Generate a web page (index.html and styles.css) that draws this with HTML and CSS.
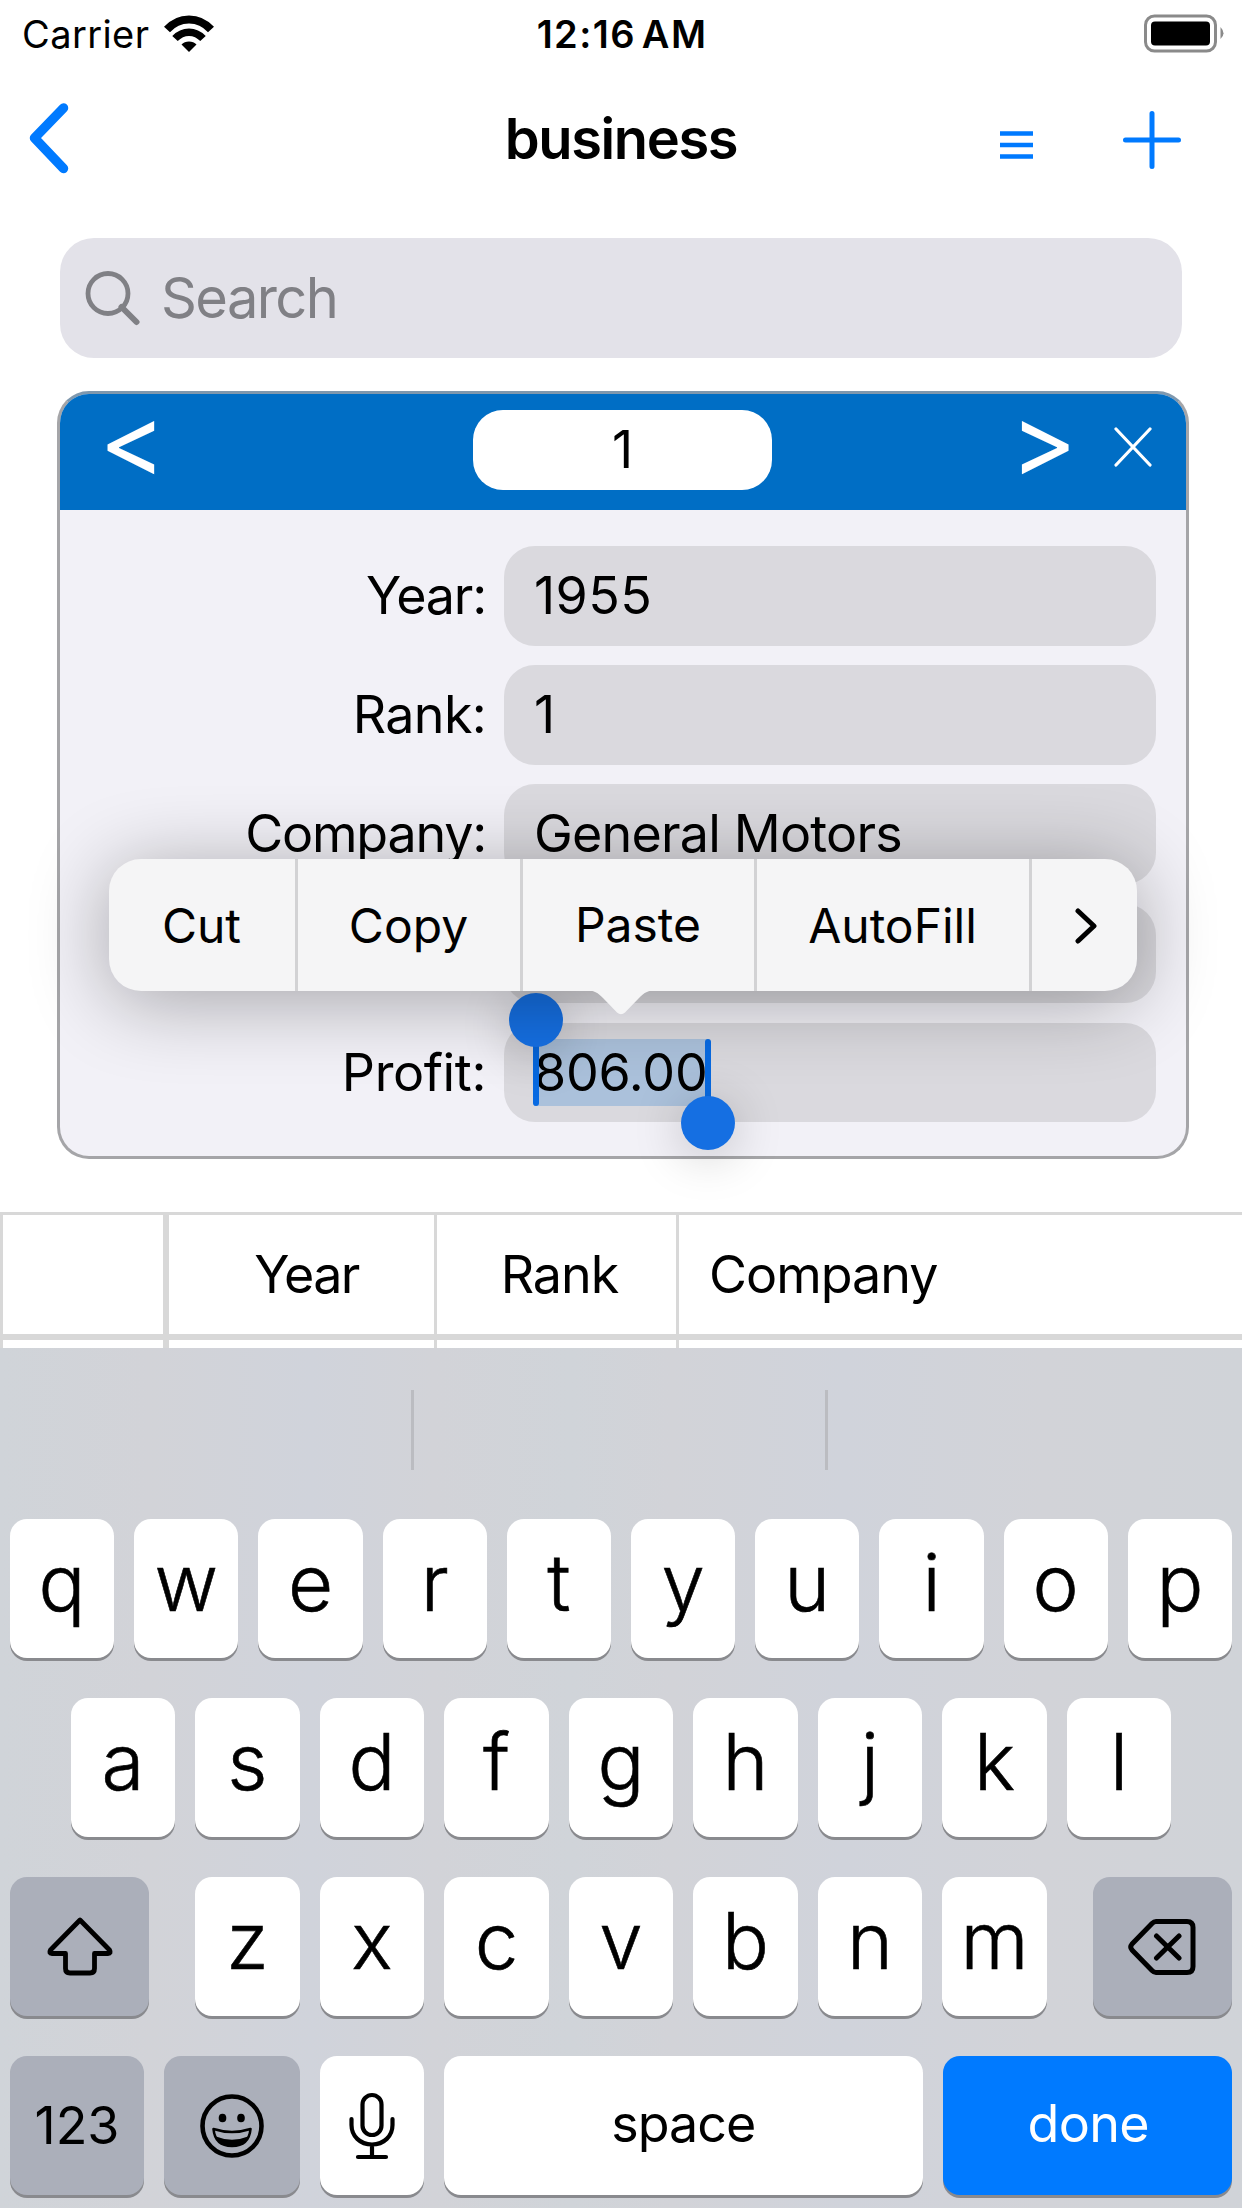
FILE: index.html
```
<!DOCTYPE html>
<html lang="en">
<head>
  <meta charset="UTF-8">
  <title>business</title>
  <link rel="stylesheet" href="styles.css">
</head>
<body>

  <div class="status-bar">
    <div class="carrier">
      <span class="carrier-name">Carrier</span>
      <svg class="wifi" width="50" height="38" viewBox="0 0 50 38">
        <path d="M3 14.5 C15 1 35 1 47 14.5" fill="none" stroke="#000" stroke-width="8"/>
        <path d="M11 23.5 C19 15 31 15 39 23.5" fill="none" stroke="#000" stroke-width="7.5"/>
        <path d="M25 37 L17.5 29.5 C21 25.5 29 25.5 32.500 29.5 Z"/>
      </svg>
    </div>
    <span class="time">12:16 AM</span>
    <svg class="battery" width="82" height="40" viewBox="0 0 82 40">
      <rect x="2.500" y="2" width="70" height="35" rx="9" fill="none" stroke="#8a8a8a" stroke-width="3"/>
      <rect x="8" y="7.500" width="59" height="24" rx="4"/>
      <path d="M77.500 13 q6 6.500 0 12 Z" fill="#8a8a8a"/>
    </svg>
  </div>

  <div class="nav-bar">
    <svg class="back" width="44" height="74" viewBox="0 0 44 74">
      <path d="M37.500 7 L8.500 37 L37.500 67.500" fill="none" stroke="#007aff" stroke-width="9.500" stroke-linecap="round" stroke-linejoin="round"/>
    </svg>
    <h1>business</h1>
    <div class="actions">
      <svg width="33" height="28" viewBox="0 0 33 28" class="list-icon">
        <path d="M0 2.500 H33 M0 14 H33 M0 25.500 H33" stroke="#007aff" stroke-width="4.500"/>
      </svg>
      <svg width="58" height="58" viewBox="0 0 58 58">
        <path d="M29 2.500 V55.500 M2.500 29 H55.500" stroke="#007aff" stroke-width="5" stroke-linecap="round"/>
      </svg>
    </div>
  </div>

  <div class="search">
    <svg width="56" height="56" viewBox="0 0 56 56">
      <path d="M36.500 37 L51.500 52" stroke="#808085" stroke-width="6" stroke-linecap="round"/>
      <circle cx="23" cy="23.500" r="20" fill="none" stroke="#808085" stroke-width="4.800"/>
    </svg>
    <span>Search</span>
  </div>

  <div class="card">
    <div class="card-header">
      <span class="prev">&lt;</span>
      <span class="record">1</span>
      <span class="next">&gt;</span>
      <svg class="close" width="38" height="40" viewBox="0 0 38 40">
        <path d="M2 2 L36 38 M36 2 L2 38" stroke="#fff" stroke-width="3.200" stroke-linecap="round"/>
      </svg>
    </div>
    <div class="fields">
      <label>Year:</label><div class="field digits">1955</div>
      <label class="rank-label">Rank:</label><div class="field">1</div>
      <label>Company:</label><div class="field">General Motors</div>
      <label></label><div class="field"></div>
      <label class="profit-label">Profit:</label>
      <div class="field">
        <span class="selection">806.00<i class="handle start"></i><i class="handle end"></i></span>
      </div>
    </div>

    <div class="edit-menu">
      <span class="item cut">Cut</span>
      <span class="item copy">Copy</span>
      <span class="item paste">Paste</span>
      <span class="item autofill">AutoFill</span>
      <span class="item more">
        <svg width="24" height="36" viewBox="0 0 24 36">
          <path d="M4 3 L20 18 L4 33" fill="none" stroke="#000" stroke-width="5" stroke-linecap="round" stroke-linejoin="round"/>
        </svg>
      </span>
      <svg class="arrow" width="76" height="26" viewBox="0 0 76 26">
        <path d="M0 0 C12 0 15 3 20 8 L34 22.500 Q38 26 42 22.500 L56 8 C61 3 64 0 76 0 Z" fill="#f5f5f6"/>
      </svg>
    </div>
  </div>

  <div class="table">
    <div class="row">
      <span class="corner"></span>
      <span class="year">Year</span>
      <span class="rank">Rank</span>
      <span class="company">Company</span>
    </div>
    <div class="row next-row">
      <span class="corner"></span>
      <span class="year"></span>
      <span class="rank"></span>
      <span class="company"></span>
    </div>
  </div>

  <div class="keyboard">
    <div class="suggestions">
      <span></span><span></span><span></span>
    </div>
    <div class="keys">
      <b>q</b><b>w</b><b>e</b><b>r</b><b>t</b><b>y</b><b>u</b><b>i</b><b>o</b><b>p</b>
    </div>
    <div class="keys">
      <b>a</b><b>s</b><b>d</b><b>f</b><b>g</b><b>h</b><b>j</b><b>k</b><b>l</b>
    </div>
    <div class="keys spread">
      <b class="dark shift">
        <svg width="70" height="62" viewBox="0 0 70 62">
          <path d="M35 4 L5.500 34 Q3.500 37.500 7 37.500 H20.500 V52.500 Q20.500 57 25 57 H45 Q49.500 57 49.500 52.500 V37.500 H63 Q66.500 37.500 64.500 34 Z" fill="none" stroke="#000" stroke-width="4.800" stroke-linejoin="round"/>
        </svg>
      </b>
      <div class="letters"><b>z</b><b>x</b><b>c</b><b>v</b><b>b</b><b>n</b><b>m</b></div>
      <b class="dark delete">
        <svg width="70" height="60" viewBox="0 0 70 60">
          <path d="M28 4.500 H59 Q65 4.500 65 10.500 V49.500 Q65 55.500 59 55.500 H28 Q26 55.500 24 53.500 L4 33 Q1.500 30 4 27 L24 6.500 Q26 4.500 28 4.500 Z M28.500 19 L51 41 M51 19 L28.500 41" fill="none" stroke="#000" stroke-width="5" stroke-linecap="round" stroke-linejoin="round"/>
        </svg>
      </b>
    </div>
    <div class="keys bottom">
      <b class="dark numbers">123</b>
      <b class="dark emoji">
        <svg width="66" height="66" viewBox="0 0 66 66">
          <circle cx="33" cy="33" r="29.500" fill="none" stroke="#000" stroke-width="4.600"/>
          <ellipse cx="23.500" cy="25" rx="3.800" ry="4.300"/>
          <ellipse cx="42" cy="25" rx="3.800" ry="4.300"/>
          <path d="M14.500 36 Q33 42 51.500 36 Q50 53 33 53 Q16 53 14.500 36 Z" fill="none" stroke="#000" stroke-width="2.600" stroke-linejoin="round"/>
          <path d="M17 43.500 Q33 50 49 43.500 Q45 53.500 33 53.500 Q21 53.500 17 43.500 Z"/>
        </svg>
      </b>
      <b class="mic">
        <svg width="50" height="68" viewBox="0 0 50 68">
          <g fill="none" stroke="#000" stroke-width="4.200" stroke-linecap="round">
            <rect x="15.500" y="3" width="19" height="40" rx="9.500"/>
            <path d="M4.500 27 V33 C4.500 44 13 52.500 25 52.500 C37 52.500 45.500 44 45.500 33 V27 M25 53 V65 M11 65 H39"/>
          </g>
        </svg>
      </b>
      <b class="space">space</b>
      <b class="done">done</b>
    </div>
  </div>

</body>
</html>
```
FILE: styles.css
```
* {
  box-sizing: border-box;
}
body {
  margin: 0;
  width: 1242px;
  height: 2208px;
  overflow: hidden;
  background: #fff;
  color: #000;
  font-family: Inter, "Liberation Sans", sans-serif;
  font-size: 52px;
}
svg {
  display: block;
  flex: none;
}

/* status bar */
.status-bar {
  height: 68px;
  display: grid;
  grid-template-columns: 1fr auto 1fr;
  align-items: center;
  padding: 0 17px 0 22px;
  font-size: 38px;
}
.carrier {
  display: flex;
  align-items: center;
  gap: 15px;
  letter-spacing: 0.4px;
}
.time {
  margin-left: -3px;
  font-weight: 600;
  letter-spacing: 1.4px;
  word-spacing: -5px;
}
.battery {
  justify-self: end;
}

/* nav bar */
.nav-bar {
  height: 170px;
  display: grid;
  grid-template-columns: 1fr auto 1fr;
  padding: 33px 26px 0;
}
h1 {
  margin: 0;
  height: 76px;
  line-height: 76px;
  font-size: 56px;
  font-weight: 600;
  letter-spacing: -1.4px;
}
.actions {
  display: flex;
  justify-content: flex-end;
  gap: 90px;
  padding: 10px 35px 0 0;
}
.list-icon {
  margin-top: 20px;
}

.search {
  height: 120px;
  margin: 0 60px 33px;
  padding-left: 25px;
  display: flex;
  align-items: center;
  gap: 20px;
  border-radius: 34px;
  background: #e3e2e9;
  color: #808085;
  font-size: 56px;
  letter-spacing: -1.6px;
}

/* record card */
.card {
  position: relative;
  width: 1132px;
  height: 768px;
  margin-left: 57px;
  border: 3px solid #a5a5a8;
  border-top-color: #7f98ae;
  border-radius: 32px;
  background: #f2f1f7;
}
.card-header {
  height: 116px;
  display: grid;
  grid-template-columns: 413px 299px 305px 1fr;
  align-items: center;
  border-radius: 29px 29px 0 0;
  background: #006ec5;
}
.prev, .next {
  padding-bottom: 26px;
  color: #fff;
  font-size: 101px;
  font-weight: 400;
  line-height: 80px;
}
.prev {
  padding-left: 39px;
}
.next {
  text-align: right;
}
.record {
  height: 80px;
  margin-bottom: 4px;
  line-height: 80px;
  border-radius: 30px;
  background: #fff;
  text-align: center;
}
.close {
  margin: 0 0 10px 37px;
}
.fields {
  display: grid;
  grid-template-columns: 426px 652px;
  grid-auto-rows: 99.5px;
  gap: 19.7px 18px;
  padding-top: 36px;
  line-height: 100px;
}
.fields label {
  text-align: right;
  letter-spacing: -1.2px;
}
.fields .rank-label {
  letter-spacing: -0.7px;
}
.fields .profit-label {
  letter-spacing: -0.4px;
}
.field {
  padding-left: 30px;
  border-radius: 31px;
  background: #dad9de;
  letter-spacing: -0.8px;
}
.digits {
  letter-spacing: 0.4px;
}
.selection {
  position: relative;
  display: inline-block;
  height: 67px;
  line-height: 67px;
  background: #abc1db;
  letter-spacing: -0.2px;
}
.handle {
  position: absolute;
  width: 6px;
  height: 67px;
  border-radius: 3px;
  background: #086ae2;
}
.handle::after {
  content: "";
  position: absolute;
  left: -24px;
  width: 54px;
  height: 54px;
  border-radius: 50%;
  background: #156fe2;
  box-shadow: 0 6px 50px rgba(0, 0, 0, 0.22);
}
.start {
  left: -1px;
  top: 0;
}
.start::after {
  top: -46px;
}
.end {
  right: -3px;
  top: 0;
}
.end::after {
  top: 57px;
}

/* callout over the fields */
.edit-menu {
  position: absolute;
  left: 49px;
  top: 465px;
  width: 1028px;
  height: 132px;
  display: flex;
  border-radius: 32px;
  background: #f5f5f6;
  box-shadow: 0 10px 80px rgba(0, 0, 0, 0.32);
  font-size: 48px;
  line-height: 134px;
  text-align: center;
}
.item {
  padding-right: 1px;
  border-right: 3px solid #d2d2d4;
}
.cut { width: 189px; }
.copy { width: 225px; }
.paste { width: 234px; line-height: 131px; }
.autofill { width: 275px; }
.more {
  flex: 1;
  display: flex;
  align-items: center;
  justify-content: center;
  padding: 2px 0 0 3px;
  border: none;
}
.arrow {
  position: absolute;
  left: 474px;
  top: 131px;
}

/* table */
.table {
  height: 136px;
  margin-top: 53px;
  border-top: 3px solid #d8d8d8;
  border-left: 3px solid #d8d8d8;
  letter-spacing: -1px;
}
.row {
  height: 125px;
  display: grid;
  grid-template-columns: 166px 268px 242px 1fr;
  border-bottom: 6px solid #d8d8d8;
  line-height: 120px;
}
.next-row {
  height: 8px;
  border: none;
}
.row span {
  border-right: 3px solid #d8d8d8;
}
.row .corner {
  border-right-width: 6px;
}
.year {
  padding-left: 10px;
  text-align: center;
  letter-spacing: -1.6px;
}
.rank {
  padding-left: 6px;
  text-align: center;
}
.row .company {
  padding-left: 30px;
  border: none;
}

/* keyboard */
.keyboard {
  height: 861px;
  padding: 0 10px;
  background: linear-gradient(90deg, #d0d4d9, #d2d3d8 12%, #d0d3db 25%, #d2d3d8 35%, #d0d4d9 46%, #d2d3d8 54%, #d0d3db 68%, #d2d3d8 84%, #d0d3d8);
}
.suggestions {
  height: 171px;
  margin: 0 -10px;
  padding-top: 42px;
  display: flex;
}
.suggestions span {
  width: 414px;
  height: 80px;
  border-left: 3px solid #bbbcc1;
}
.suggestions span:first-child {
  width: 411px;
  border: none;
}
.keys {
  height: 139px;
  margin-bottom: 40px;
  display: flex;
  justify-content: center;
  gap: 20px;
}
.spread {
  justify-content: space-between;
}
.letters {
  display: flex;
  gap: 20px;
}
.keys b {
  width: 104.5px;
  height: 139px;
  display: flex;
  justify-content: center;
  border-radius: 17px;
  background: #fff;
  box-shadow: 0 3px 0 #898a8e;
  font-size: 78px;
  font-weight: 300;
  line-height: 127px;
  -webkit-text-stroke: 0.6px;
}
.keys .dark {
  align-items: center;
  background: #abafba;
}
.keys .shift, .keys .delete {
  width: 139px;
}
.bottom .numbers, .bottom .space, .bottom .done {
  font-size: 52px;
  font-weight: 400;
  line-height: 136px;
  -webkit-text-stroke: 0;
}
.bottom .numbers {
  width: 134px;
  line-height: 140px;
}
.bottom .emoji { width: 135.5px; }
.bottom .mic { align-items: center; }
.bottom .space {
  width: 478.5px;
  letter-spacing: -1px;
}
.bottom .done {
  flex: 1;
  padding-left: 2px;
  background: #007aff;
  color: #fff;
  letter-spacing: -0.6px;
}
```
